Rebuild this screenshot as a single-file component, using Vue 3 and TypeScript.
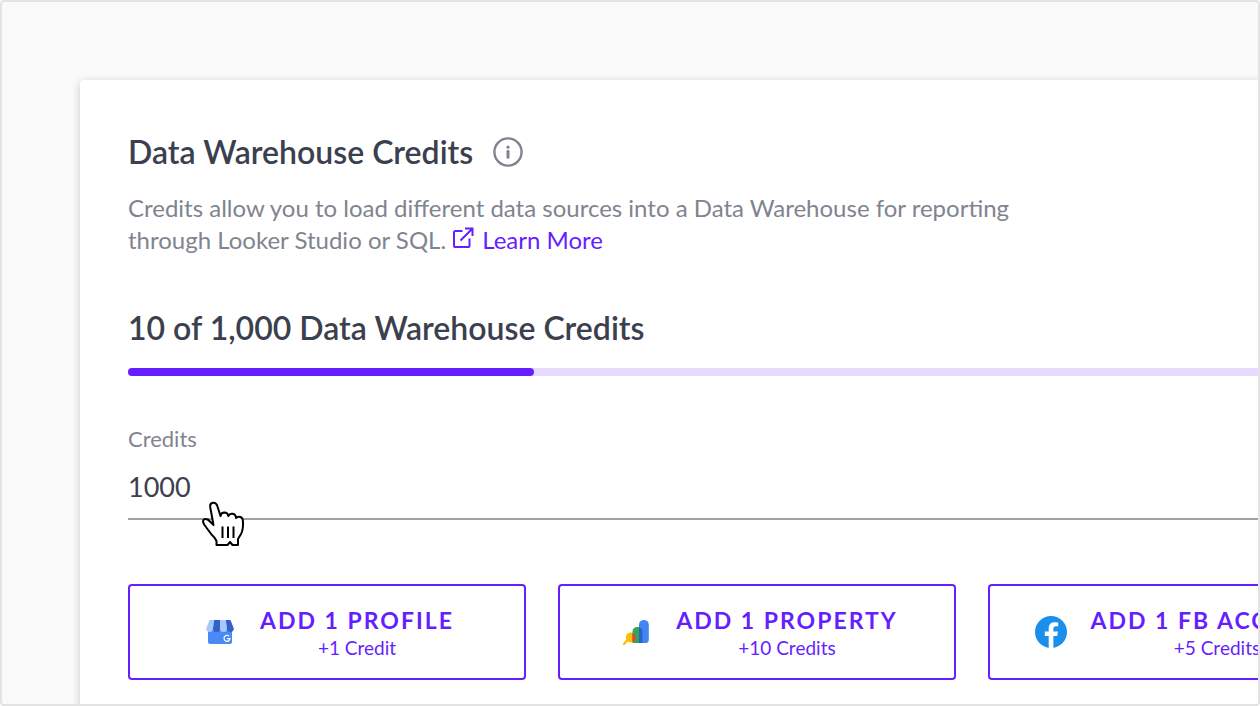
<script setup lang="ts">
import { ref } from 'vue'

interface CreditOption {
  id: 'profile' | 'property' | 'facebook'
  label: string
  credits: string
}

const credits = ref('1000')
const usedPercent = 32.3

const options: CreditOption[] = [
  { id: 'profile', label: 'Add 1 Profile', credits: '+1 Credit' },
  { id: 'property', label: 'Add 1 Property', credits: '+10 Credits' },
  { id: 'facebook', label: 'Add 1 FB Account', credits: '+5 Credits' },
]
</script>

<template>
  <main class="page">
    <section class="card">
      <header class="heading">
        <h1 class="title">Data Warehouse Credits</h1>
        <button class="info" type="button" aria-label="About credits">
          <svg viewBox="0 0 30 30" width="30" height="30" aria-hidden="true">
            <circle cx="15" cy="15" r="13.6" fill="none" stroke="currentColor" stroke-width="2.4" />
            <circle cx="15" cy="10.2" r="1.6" fill="currentColor" />
            <path d="M15 14.2v6" stroke="currentColor" stroke-width="3" stroke-linecap="round" />
          </svg>
        </button>
      </header>

      <p class="intro">
        Credits allow you to load different data sources into a Data Warehouse for reporting<br />
        through Looker Studio or SQL.
        <a class="learn" href="#learn-more"><svg class="external" viewBox="0 0 22 22" width="22" height="22" aria-hidden="true">
          <path d="M10.5 4H3.6Q2 4 2 5.6V18.400Q2 20 3.600 20H15.900Q17.500 20 17.500 18.400V11.500M8.500 13.500L20 2M13 1.500H20.500V9" fill="none" stroke="currentColor" stroke-width="2" />
        </svg>Learn More</a>
      </p>

      <h2 class="title usage">10 of 1,000 Data Warehouse Credits</h2>
      <div class="track" role="progressbar" aria-label="Data Warehouse Credits" :aria-valuenow="usedPercent">
        <div class="fill" :style="{ width: usedPercent + '%' }"></div>
      </div>

      <div class="field">
        <label class="label" for="credits">Credits</label>
        <input id="credits" v-model="credits" class="input" type="text" inputmode="numeric" />
        <svg class="pointer" viewBox="0 0 44 46" width="44" height="46" aria-hidden="true">
          <path
            d="M15.500 44V40Q14 36.500 10.500 33.500L3.500 24Q0.500 19.500 3.500 18.200Q6.500 17.300 9.500 21L12.500 24L9.200 6Q8.700 2.200 12 1.700Q15.500 1.500 16.500 5.500L19.500 15Q20 11.500 23.300 11.500Q27 11.700 27.200 15Q28.500 12.300 31.500 12.700Q35 13.300 35 17Q36.500 15.300 39.500 16Q42.200 17 42 21.500Q42.200 29 40 33L37 38V44H31.500L29 41L26.500 44Z"
            fill="#fff" stroke="#000" stroke-width="2" stroke-linejoin="round"
          />
          <path d="M21.500 25.500V37M27 25.500V37M32.500 25.500V37" stroke="#000" stroke-width="2" />
        </svg>
      </div>

      <div class="options">
        <button v-for="option in options" :key="option.id" class="option" type="button">
          <span class="icon">
            <svg v-if="option.id === 'profile'" viewBox="0 0 28 26" width="28" height="26" aria-hidden="true">
              <path d="M2 8H26V23Q26 25 24 25H4Q2 25 2 23Z" fill="#4a8af4" />
              <path d="M3.500 1H8.200L7 9.500A3.400 3.400 0 0 1 0.200 9.500Z" fill="#a6c8fb" />
              <path d="M8.200 1H14V9.500A3.500 3.500 0 0 1 7 9.500Z" fill="#3560c6" />
              <path d="M14 1H19.800L21 9.500A3.500 3.500 0 0 1 14 9.500Z" fill="#a6c8fb" />
              <path d="M19.800 1H24.500L27.800 9.500A3.400 3.400 0 0 1 21 9.500Z" fill="#3560c6" />
              <path d="M23.200 17.200A3 3 0 1 0 24 19.700H21" fill="none" stroke="#fff" stroke-width="1.200" />
            </svg>
            <svg v-else-if="option.id === 'property'" viewBox="0 0 28 26" width="28" height="26" aria-hidden="true">
              <path d="M2 25L5 21.500" stroke="#fbbc04" stroke-width="2.200" stroke-linecap="round" />
              <circle cx="8.800" cy="18.500" r="5" fill="#fbbc04" />
              <path d="M10.500 12.500A4.500 4.500 0 0 1 15 8H17V24H10.500Z" fill="#34a853" />
              <path d="M10.500 14Q13.800 15.500 13.800 18.500T10.500 23Z" fill="#ea4335" />
              <path d="M17 5.800A4.800 4.800 0 0 1 26.800 5.800V21Q26.800 24 23.800 24H17Z" fill="#4285f4" />
              <path d="M17 8Q20.500 9 20.500 13V24H17Z" fill="#2c62c6" />
            </svg>
            <svg v-else viewBox="0 0 32 32" width="32" height="32" aria-hidden="true">
              <circle cx="16" cy="16" r="16" fill="#1a90ec" />
              <path d="M13.700 32V20H9.800V15.600H13.700V12.300C13.700 8.300 16 6.200 19.600 6.200Q21.500 6.200 23.200 6.500V10.300H21.200C19.100 10.300 18.400 11.500 18.400 12.800V15.600H22.900L22.200 20H18.400V32Z" fill="#fff" />
            </svg>
          </span>
          <span class="copy">
            <span class="action">{{ option.label }}</span>
            <span class="cost">{{ option.credits }}</span>
          </span>
        </button>
      </div>
    </section>
  </main>
</template>

<style>
body {
  margin: 0;
  background: #fff;
}
</style>

<style scoped>
.page {
  box-sizing: border-box;
  height: 100vh;
  padding: 78px 0 0 78px;
  overflow: hidden;
  border: 2px solid #e3e3e3;
  border-radius: 4px;
  background: #fafafa;
  color: #3b404e;
  font-family: Lato, "Liberation Sans", sans-serif;
}

.card {
  box-sizing: border-box;
  min-width: 1354px;
  min-height: 100%;
  padding: 48px;
  border-radius: 4px;
  background: #fff;
  box-shadow: 0 2px 8px rgba(0, 0, 0, 0.2);
}

.heading {
  display: flex;
  align-items: center;
  gap: 20px;
}

.title {
  margin: 0;
  font-size: 32px;
  font-weight: 600;
  line-height: 48px;
}

.info {
  display: flex;
  padding: 0;
  border: 0;
  background: none;
  color: #80848f;
}

.intro {
  margin: 16px 0 0;
  color: #80848f;
  font-size: 24px;
  line-height: 32px;
  white-space: nowrap;
}

.learn {
  color: #651fff;
  text-decoration: none;
}

.external {
  margin-right: 8px;
}

.usage {
  margin-top: 48px;
}

.track {
  height: 8px;
  margin-top: 16px;
  border-radius: 4px;
  background: #e6dbff;
}

.fill {
  height: 100%;
  border-radius: 4px;
  background: #651fff;
}

.field {
  position: relative;
  display: flex;
  flex-direction: column;
  margin-top: 48px;
}

.label {
  color: #80848f;
  font-size: 22px;
  line-height: 30px;
}

.input {
  height: 66px;
  box-sizing: border-box;
  padding: 0;
  border: 0;
  border-bottom: 2px solid #9fa2aa;
  outline: 0;
  background: none;
  color: #3b404e;
  font: inherit;
  font-size: 27px;
}

.pointer {
  position: absolute;
  top: 77px;
  left: 73px;
}

.options {
  display: grid;
  grid-template-columns: repeat(3, 1fr);
  gap: 32px;
  margin-top: 64px;
}

.option {
  display: flex;
  align-items: center;
  justify-content: center;
  gap: 20px;
  height: 96px;
  padding: 0;
  border: 2px solid #651fff;
  border-radius: 4px;
  background: #fff;
  color: #651fff;
  font: inherit;
  white-space: nowrap;
}

.icon {
  display: flex;
  flex: none;
  align-items: center;
  justify-content: center;
  width: 40px;
}

.copy {
  display: flex;
  flex-direction: column;
  align-items: center;
  padding-top: 4px;
}

.action {
  font-size: 23px;
  font-weight: 700;
  letter-spacing: 2px;
  line-height: 28px;
  text-transform: uppercase;
}

.cost {
  font-size: 19px;
  line-height: 28px;
}
</style>
